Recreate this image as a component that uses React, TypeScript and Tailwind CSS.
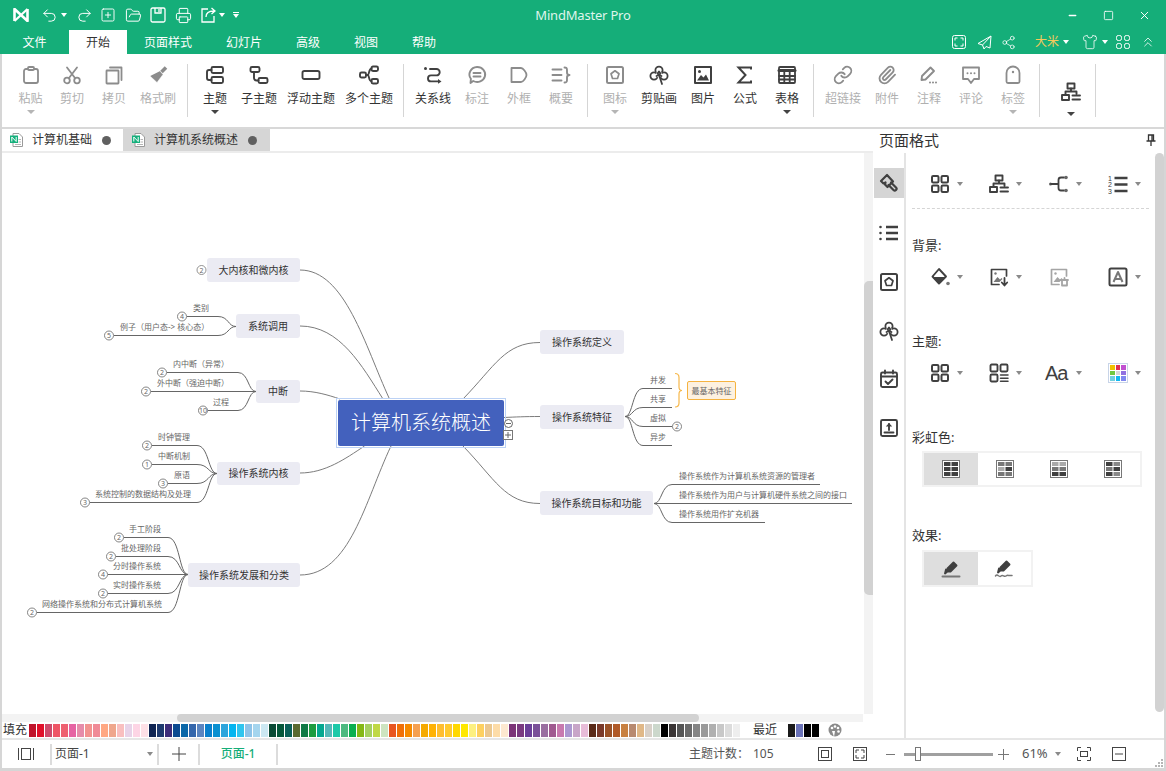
import { type ReactNode } from 'react'
import { Link, Paperclip, Undo2, Redo2, SquarePlus, FolderOpen, Printer, Share2, Shirt, ChevronsUp, Minus, Square, X } from 'lucide-react'

function I({ size = 20, sw = 1.9, children }: { size?: number; sw?: number; children: ReactNode }) {
  return (
    <svg width={size} height={size} viewBox="0 0 20 20" fill="none" stroke="currentColor" strokeWidth={sw} strokeLinejoin="round" strokeLinecap="round">
      {children}
    </svg>
  )
}

function Caret({ light }: { light?: boolean }) {
  return <span className={light ? 'block w-0 h-0 border-x-[4px] border-x-transparent border-t-[4px] border-t-[#b5b5b5]' : 'block w-0 h-0 border-x-[4px] border-x-transparent border-t-[4px] border-t-[#444444]'} />
}

function SmallCaret() {
  return <span className="block w-0 h-0 border-x-[3.5px] border-x-transparent border-t-[4px] border-t-[#8a8a8a]" />
}

function WhiteCaret() {
  return <span className="block w-0 h-0 border-x-[3.5px] border-x-transparent border-t-[4px] border-t-white" />
}

const Clover = () => (
  <I sw={1.8}>
    <circle cx="10" cy="5.2" r="3.6" />
    <circle cx="5" cy="11" r="3.6" />
    <circle cx="15" cy="11" r="3.6" />
    <circle cx="10" cy="9.6" r="3" fill="white" stroke="none" />
    <path d="M10 6.500l-1.500 2 1.500 1.500 1.500 -1.500zM7.500 11l2.500 -1 2.500 1M10 10l3 9" />
  </I>
)
const Grid4 = () => (
  <I sw={2}>
    <rect x="2" y="2" width="6.500" height="6.500" rx="1.200" />
    <rect x="11.500" y="2" width="6.500" height="6.500" rx="1.200" />
    <rect x="2" y="11.500" width="6.500" height="6.500" rx="1.200" />
    <rect x="11.500" y="11.500" width="6.500" height="6.500" rx="1.200" />
  </I>
)
const Org = () => (
  <I sw={1.9}>
    <rect x="6.500" y="1.500" width="7" height="5" />
    <path d="M10 6.500V9.500M4.500 12.500V9.500H15.500V12" />
    <rect x="1" y="13" width="7" height="5" />
    <path d="M11.500 13.500H19M11.500 17.500H19" />
  </I>
)
const Brush = () => (
  <I sw={2.2}>
    <path d="M8 2L2 8l2.500 2.500 2 -1 -0.500 2 2.500 2.500 5.500 -5.500z" />
    <path d="M12 9.500l5 5a1.700 1.700 0 0 1 -2.500 2.500l-5 -5" />
  </I>
)
const StarFrame = () => (
  <I sw={2}>
    <rect x="2" y="2" width="16" height="16" rx="1.500" />
    <path d="M10 5.800l4 3 -1.500 4.700H7.500L6 8.800z" strokeWidth="1.700" />
  </I>
)
const ImageBase = ({ fill }: { fill: string }) => (
  <>
    <path d="M17.500 9V2.500h-15v15H10" />
    <circle cx="6.500" cy="6.500" r="1.200" fill={fill} stroke="none" />
    <path d="M4.500 15l4 -5 2.500 2.500 1.500 -1.500 1 1 -3 3z" fill={fill} stroke="none" />
  </>
)
const FrameTable = ({ shades }: { shades: string[] }) => (
  <svg width="18" height="18" viewBox="0 0 18 18">
    <rect x="0.500" y="0.500" width="17" height="17" fill="white" stroke="#777777" />
    {shades.map((c, i) => (
      <rect key={i} x={i % 2 === 0 ? 2 : 9.5} y={2 + Math.floor(i / 2) * 5} width="6.500" height="4" fill={c} />
    ))}
  </svg>
)

function RibbonBtn({ w, label, off, caret, children }: { w: string; label: string; off?: boolean; caret?: boolean; children: ReactNode }) {
  return (
    <div className={`${w} flex flex-col items-center pt-[11px] ${off ? 'text-[#8c8c8c]' : 'text-[#404040]'}`}>
      <div className="h-[20px] flex items-center justify-center">{children}</div>
      <div className={`mt-[6px] text-[12px] leading-[16px] whitespace-nowrap ${off ? 'text-[#b0b0b0]' : 'text-[#333333]'}`}>{label}</div>
      {caret && <div className="mt-[3px]"><Caret light={off} /></div>}
    </div>
  )
}

const RSep = ({ cls }: { cls: string }) => <div className={`w-px h-[53px] bg-[#d5d5d5] mt-[10px] ${cls}`} />

function Ribbon() {
  return (
    <div className="h-[73px] flex pl-[8px] border-b-2 border-[#d8d8d8] box-content">
      <RibbonBtn w="w-[41px]" label="粘贴" off caret>
        <I sw={1.8}><rect x="3" y="4" width="14" height="14" rx="2" /><rect x="7" y="2" width="6" height="3" rx="1" fill="white" /></I>
      </RibbonBtn>
      <RibbonBtn w="w-[42px]" label="剪切" off>
        <I sw={1.8}><circle cx="5" cy="15.500" r="2.800" /><circle cx="15" cy="15.500" r="2.800" /><path d="M6.800 13.300L15 2.500M13.200 13.300L5 2.500" /></I>
      </RibbonBtn>
      <RibbonBtn w="w-[42px]" label="拷贝" off>
        <I sw={1.8}><rect x="2.500" y="5.500" width="12" height="13" rx="0.500" /><path d="M6 2.500h11.500V15" /></I>
      </RibbonBtn>
      <RibbonBtn w="w-[46px]" label="格式刷" off>
        <I sw={1.5}><path d="M12 6l3 3.500 -6 8L2 11z" fill="currentColor" stroke="white" strokeWidth="0.500" /><path d="M13.500 7L18 2.500" strokeWidth="3.500" strokeLinecap="butt" /></I>
      </RibbonBtn>
      <RSep cls="ml-[6px] mr-[6px]" />
      <RibbonBtn w="w-[42px]" label="主题" caret>
        <I><rect x="6.500" y="2" width="11.500" height="6" rx="1.500" /><rect x="6.500" y="12" width="11.500" height="6" rx="1.500" /><path d="M6.500 5H4a2 2 0 0 0 -2 2v6a2 2 0 0 0 2 2h2.500" /></I>
      </RibbonBtn>
      <RibbonBtn w="w-[46px]" label="子主题">
        <I><rect x="1.500" y="2" width="9" height="5" rx="1.500" /><rect x="9.500" y="13" width="9" height="5" rx="1.500" /><path d="M5 7v6a2.500 2.500 0 0 0 2.500 2.500h2" /></I>
      </RibbonBtn>
      <RibbonBtn w="w-[58px]" label="浮动主题">
        <I><rect x="1.500" y="6" width="17" height="8" rx="1.800" /></I>
      </RibbonBtn>
      <RibbonBtn w="w-[58px]" label="多个主题">
        <I><rect x="1" y="7.500" width="6" height="5" rx="1.500" /><rect x="12.500" y="1.500" width="6.500" height="4.500" rx="1.500" /><rect x="12.500" y="14" width="6.500" height="4.500" rx="1.500" /><path d="M7 10h1.500c2 0 1 -6.200 4 -6.200M8.500 10c2 0 1 6.200 4 6.200" /></I>
      </RibbonBtn>
      <RSep cls="ml-[5px] mr-[6px]" />
      <RibbonBtn w="w-[46px]" label="关系线">
        <I sw={1.9}><circle cx="2.500" cy="3.500" r="1.500" fill="currentColor" stroke="none" /><path d="M7 4h6.500a3.200 3.200 0 0 1 0 6.400H8a3 3 0 0 0 0 6h7" /><path d="M15 14l3.500 2.400 -3.500 2.400z" fill="currentColor" stroke="none" /></I>
      </RibbonBtn>
      <RibbonBtn w="w-[42px]" label="标注" off>
        <I><path d="M10 2a8 7.500 0 1 1 -3.800 14L3.500 18l0.400 -4.200A8 7.500 0 0 1 10 2z" /><path d="M6.500 8h7M6.500 11.500h7" /></I>
      </RibbonBtn>
      <RibbonBtn w="w-[42px]" label="外框" off>
        <I sw={1.8}><path d="M2.500 3H12c2 0 5.500 4.500 5.500 7s-3.500 7 -5.500 7H2.500z" /></I>
      </RibbonBtn>
      <RibbonBtn w="w-[42px]" label="概要" off>
        <I><path d="M1.500 4.500H10.500M1.500 10H10.500M1.500 15.500H10.500" /><path d="M13.500 2.500c2.500 0 2.500 1 2.500 2.500v2.500c0 1.500 1 2.500 2.500 2.500 -1.500 0 -2.500 1 -2.500 2.500V15c0 1.500 0 2.500 -2.500 2.500" /></I>
      </RibbonBtn>
      <RSep cls="ml-[5px] mr-[6px]" />
      <RibbonBtn w="w-[42px]" label="图标" off caret><StarFrame /></RibbonBtn>
      <RibbonBtn w="w-[46px]" label="剪贴画"><Clover /></RibbonBtn>
      <RibbonBtn w="w-[42px]" label="图片">
        <I sw={2}><rect x="2" y="2" width="16" height="16" /><circle cx="6.500" cy="6.500" r="1.500" fill="currentColor" stroke="none" /><path d="M4 15.500l4 -5.500 2.500 2.500 2.500 -3 3 6z" fill="currentColor" stroke="none" /></I>
      </RibbonBtn>
      <RibbonBtn w="w-[42px]" label="公式">
        <I sw={2}><path d="M16 4.500V2.500H3.500L10.500 10l-7 7.500H16v-2" strokeLinejoin="miter" strokeLinecap="butt" /></I>
      </RibbonBtn>
      <RibbonBtn w="w-[42px]" label="表格" caret>
        <I sw={1.8}><rect x="2" y="2" width="16" height="16" rx="1" /><path d="M2 5.500H18" strokeWidth="3" /><path d="M2 11H18M2 14.500H18M7.300 7V18M12.700 7V18" /></I>
      </RibbonBtn>
      <RSep cls="ml-[5px] mr-[6px]" />
      <RibbonBtn w="w-[46px]" label="超链接" off><Link size={20} strokeWidth={2.2} /></RibbonBtn>
      <RibbonBtn w="w-[42px]" label="附件" off><Paperclip size={20} strokeWidth={2.2} /></RibbonBtn>
      <RibbonBtn w="w-[42px]" label="注释" off>
        <I><path d="M2.500 15l0.500 -4L11.500 2.500l3.500 3.500L6.500 14.500z" fill="none" /><path d="M11 17.500v0M14 17.500v0M17 17.500v0" strokeWidth="2" /></I>
      </RibbonBtn>
      <RibbonBtn w="w-[42px]" label="评论" off>
        <I sw={1.8}><path d="M2 2.500h16v11.500h-5l-3 4 -3 -4H2z" /><path d="M6.500 8.200v0M10 8.200v0M13.500 8.200v0" strokeWidth="2" /></I>
      </RibbonBtn>
      <RibbonBtn w="w-[42px]" label="标签" off caret>
        <I sw={1.8}><path d="M3.500 16.500V8a6.500 6.500 0 0 1 13 0v8.500a1.500 1.500 0 0 1 -1.500 1.500H5a1.500 1.500 0 0 1 -1.500 -1.500z" /><circle cx="10" cy="7" r="1.200" fill="currentColor" stroke="none" /></I>
      </RibbonBtn>
      <RSep cls="ml-[5px] mr-[6px]" />
      <div className="w-[49px] flex flex-col items-center text-[#404040]">
        <div className="mt-[28px]"><Org /></div>
        <div className="mt-[10px]"><Caret /></div>
      </div>
      <RSep cls="" />
    </div>
  )
}

const DocIcon = () => (
  <svg width="13" height="14" viewBox="0 0 13 14">
    <path d="M3 0.500h6l3.500 3.500v9.500H3z" fill="white" stroke="#9a9a9a" />
    <rect x="0" y="2.500" width="8" height="7.500" fill="#15b07c" />
    <path d="M1.800 8.500V4l4.400 4.500V4" stroke="white" strokeWidth="1" fill="none" />
    <path d="M8.500 6.500h2.500M8.500 9h2.500M5 11.500h6" stroke="#b5b5b5" />
  </svg>
)

function DocTabs() {
  return (
    <div className="h-[24px] flex border-b-2 border-[#ececec] box-border shrink-0">
      <div className="w-[121px] h-[22px] flex items-center pl-[8px] text-[12px] text-[#333333]">
        <DocIcon />
        <span className="ml-[9px] w-[60px]">计算机基础</span>
        <span className="ml-[10px] w-[9px] h-[9px] rounded-full bg-[#606060]" />
      </div>
      <div className="w-[147px] h-[22px] bg-[#d6d6d6] flex items-center pl-[9px] text-[12px] text-[#333333]">
        <DocIcon />
        <span className="ml-[9px] w-[84px]">计算机系统概述</span>
        <span className="ml-[10px] w-[9px] h-[9px] rounded-full bg-[#606060]" />
      </div>
    </div>
  )
}

type Topic = { t: string; x: number; y: number; w: number; h: number }
type Leaf = { t: string; x: number; y: number; n?: number; end: number }
type Group = { ox: number; oy: number; lx: number; leaves: Leaf[] }

const topics: Topic[] = [
  { t: '大内核和微内核', x: 207, y: 257, w: 93, h: 24 },
  { t: '系统调用', x: 236, y: 313, w: 64, h: 24 },
  { t: '中断', x: 256, y: 379, w: 44, h: 23 },
  { t: '操作系统内核', x: 217, y: 461, w: 83, h: 23 },
  { t: '操作系统发展和分类', x: 188, y: 562, w: 112, h: 24 },
  { t: '操作系统定义', x: 540, y: 329, w: 84, h: 24 },
  { t: '操作系统特征', x: 540, y: 404, w: 84, h: 24 },
  { t: '操作系统目标和功能', x: 540, y: 490, w: 113, h: 24 },
]

// y is the line under the label, x the label's left edge
const leftGroups: Group[] = [
  {
    ox: 236, oy: 325.5, lx: 218,
    leaves: [
      { t: '类别', x: 193, y: 315.5, n: 4, end: 187 },
      { t: '例子（用户态-> 核心态）', x: 120, y: 334.5, n: 5, end: 114 },
    ],
  },
  {
    ox: 256, oy: 390.5, lx: 238,
    leaves: [
      { t: '内中断（异常）', x: 173, y: 371.5, n: 2, end: 167 },
      { t: '外中断（强迫中断）', x: 157, y: 390.5, n: 2, end: 151 },
      { t: '过程', x: 213, y: 409.5, n: 10, end: 208 },
    ],
  },
  {
    ox: 217, oy: 472.5, lx: 197,
    leaves: [
      { t: '时钟管理', x: 158, y: 444.5, n: 2, end: 152 },
      { t: '中断机制', x: 158, y: 463.5, n: 1, end: 152 },
      { t: '原语', x: 174, y: 482.5, n: 3, end: 168 },
      { t: '系统控制的数据结构及处理', x: 95, y: 501.5, n: 3, end: 90 },
    ],
  },
  {
    ox: 188, oy: 573.5, lx: 168,
    leaves: [
      { t: '手工阶段', x: 129, y: 536.5, n: 2, end: 124 },
      { t: '批处理阶段', x: 121, y: 555.5, n: 2, end: 116 },
      { t: '分时操作系统', x: 113, y: 573.5, n: 4, end: 108 },
      { t: '实时操作系统', x: 113, y: 592.5, n: 2, end: 108 },
      { t: '网络操作系统和分布式计算机系统', x: 42, y: 611.5, n: 2, end: 37 },
    ],
  },
]

const rightGroups: Group[] = [
  {
    ox: 625, oy: 415.5, lx: 643,
    leaves: [
      { t: '并发', x: 650, y: 387.5, end: 672 },
      { t: '共享', x: 650, y: 406.5, end: 672 },
      { t: '虚拟', x: 650, y: 425.5, end: 672, n: 2 },
      { t: '异步', x: 650, y: 444.5, end: 672 },
    ],
  },
  {
    ox: 654, oy: 502.5, lx: 672,
    leaves: [
      { t: '操作系统作为计算机系统资源的管理者', x: 679, y: 483.5, end: 820 },
      { t: '操作系统作为用户与计算机硬件系统之间的接口', x: 679, y: 502.5, end: 852 },
      { t: '操作系统用作扩充机器', x: 679, y: 521.5, end: 765 },
    ],
  },
]

const mainCurves = [
  'M300 269C345 269 365 345 389.5 398',
  'M300 325C340 325 362 365 383 398',
  'M300 390C315 390 328 394 340 398',
  'M300 472C325 472 345 458 364.5 445',
  'M300 574C350 574 365 500 391 445',
  'M463 398C495 365 505 341.5 540 341.5',
  'M504 416.5C515 416 525 415.5 540 415.5',
  'M463 445C495 478 505 502.5 540 502.5',
]

function MindMap() {
  const leaves = [...leftGroups, ...rightGroups].flatMap((g) => g.leaves)
  const badgeX = (l: Leaf) => (l.end > 600 ? l.end + 5 : l.end - 5)
  return (
    <div className="absolute left-[-2px] top-[-152px] w-[1166px] h-[771px]">
      <svg className="absolute left-0 top-0" width="1166" height="771" fill="none">
        {mainCurves.map((d) => <path key={d} d={d} stroke="#7c7c7c" strokeWidth="1" />)}
        {[...leftGroups, ...rightGroups].map((g) =>
          g.leaves.map((l) => {
            const dir = Math.sign(g.lx - g.ox)
            const dx = Math.abs(g.lx - g.ox)
            const start = `M${g.ox} ${g.oy}`
            const curve = Math.abs(l.y - g.oy) < 1 ? `L${l.end} ${l.y}` : `C${g.ox + dir * dx * 0.45} ${g.oy} ${g.ox + dir * dx * 0.4} ${l.y} ${g.lx} ${l.y}L${l.end} ${l.y}`
            return <path key={l.t} d={start + curve} stroke="#666666" strokeWidth="1" />
          }),
        )}
        <path d="M675 372.5c3 0 4 1 4 4v9.500c0 3 1 3.500 3 3.500 -2 0 -3 0.500 -3 3.500v9c0 3 -1 4 -4 4" stroke="#f7b84b" strokeWidth="1.2" />
        <circle cx="201.5" cy="269" r="4.5" fill="white" stroke="#777777" strokeWidth="0.8" />
        {leaves.filter((l) => l.n).map((l) => (
          <circle key={l.t} cx={badgeX(l)} cy={l.y} r="4.5" fill="white" stroke="#666666" strokeWidth="0.8" />
        ))}
      </svg>
      {topics.map((n) => (
        <div key={n.t} className="absolute flex items-center justify-center rounded-[3px] bg-[#ebebf3] text-[10px] text-[#333333] whitespace-nowrap" style={{ left: n.x, top: n.y, width: n.w, height: n.h }}>
          {n.t}
        </div>
      ))}
      {leaves.map((l) => (
        <div key={l.t} className="absolute text-[8px] leading-[10px] text-[#666666] whitespace-nowrap" style={{ left: l.x, top: l.y - 13.5 }}>
          {l.t}
        </div>
      ))}
      {leaves.filter((l) => l.n).map((l) => (
        <div key={l.t} className="absolute w-[9px] text-center text-[7px] leading-[9px] text-[#666666]" style={{ left: badgeX(l) - 4.5, top: l.y - 4.5 }}>
          {l.n}
        </div>
      ))}
      <div className="absolute left-[197px] top-[264.5px] w-[9px] text-center text-[7px] leading-[9px] text-[#666666]">2</div>
      <div className="absolute left-[336px] top-[397px] w-[170px] h-[50px] border border-[#bcd2f5] p-[1px]">
        <div className="w-full h-full rounded-[2px] bg-[#4361bd] flex items-center justify-center text-[20px] text-white font-light whitespace-nowrap">计算机系统概述</div>
      </div>
      <div className="absolute left-[503.5px] top-[418px] w-[9px] h-[9px] rounded-full border border-[#666666] bg-white flex items-center justify-center">
        <span className="w-[5px] h-px bg-[#666666]" />
      </div>
      <svg className="absolute left-[503px] top-[428.5px]" width="10" height="10" fill="none">
        <rect x="0.5" y="0.5" width="9" height="9" fill="white" stroke="#777777" />
        <path d="M2 5H8M5 2V8" stroke="#666666" />
      </svg>
      <div className="absolute left-[687px] top-[380px] w-[49px] h-[19px] rounded-[2px] border border-[#f5b340] bg-[#fdf1e0] flex items-center justify-center text-[8px] text-[#666666]">最基本特征</div>
    </div>
  )
}

const reds = ['#c0132a', '#e0102a', '#ce4a6b', '#ee5566', '#ee6070', '#e663a3', '#e68caa', '#f29390', '#f08a96', '#ffa782', '#efa68c', '#f9bfbf', '#e8d3e8', '#fdd5e5', '#fde0e6']
const blues = ['#0f2452', '#1e3a6e', '#3d2d7a', '#0c4a90', '#0a67a8', '#3567ac', '#5b85c0', '#0a80cc', '#0a90d0', '#2da5dc', '#05b5f0', '#30c5ee', '#8ec3e8', '#a5d5ee', '#cce8f2']
const greens = ['#0a4a35', '#05573a', '#0a6058', '#5a6a30', '#0f7a45', '#1c9c40', '#05a890', '#55b8b8', '#1cc9a8', '#4cb97f', '#0aaf50', '#85b815', '#a5d060', '#c0d845', '#cde4c0']
const oranges = ['#e85520', '#f07008', '#f58a00', '#f5a050', '#f5aa00', '#ffb205', '#ffbe30', '#ffca30', '#ffd800', '#ffe800', '#fdf080', '#fdd060', '#ebc890', '#fddca8', '#fde8d0']
const purples = ['#7c3478', '#7a3a80', '#6b3f98', '#7a5098', '#9a6ea0', '#a05a90', '#c87aaf', '#ac98d0', '#c8a5c8', '#e8bcd8']
const browns = ['#5a2a18', '#7a3a2a', '#9a5228', '#b05a28', '#c88040', '#b88a70', '#e0b888', '#d8d0c8', '#ccd8cc']
const greys = ['#000000', '#3a3535', '#555555', '#6a6a6a', '#858585', '#9a9a9a', '#b0b0b0', '#c8c8c8', '#dcdcdc', '#eeeeee']
const recent = ['#1a1a1a', '#6a72b8', '#000000', '#000000']

function Palette() {
  const all = [...reds, ...blues, ...greens, ...oranges, ...purples, ...browns, ...greys]
  return (
    <div className="h-[16px] flex items-center shrink-0 text-[12px] text-[#333333]">
      <span className="w-[27px] pl-px">填充</span>
      {all.map((c, i) => <span key={i} className="w-[8px] h-[13px] border-r border-white" style={{ backgroundColor: c }} />)}
      <span className="ml-[12px] w-[35px]">最近</span>
      {recent.map((c, i) => <span key={i} className="w-[8px] h-[13px] border-r border-white" style={{ backgroundColor: c }} />)}
      <svg className="ml-[8px]" width="14" height="14" viewBox="0 0 14 14">
        <circle cx="7" cy="7" r="6.5" fill="#8a8a8a" />
        <circle cx="4" cy="5" r="1.3" fill="white" />
        <circle cx="7" cy="3.5" r="1.3" fill="white" />
        <circle cx="10" cy="5" r="1.3" fill="white" />
        <circle cx="10.5" cy="8.5" r="1.3" fill="white" />
        <path d="M6 14L7 8H4z" fill="white" />
      </svg>
    </div>
  )
}

function Drop({ w, pl, caret = true, children }: { w: string; pl: string; caret?: boolean; children: ReactNode }) {
  return (
    <div className={`${w} ${pl} h-[24px] flex items-center text-[#404040]`}>
      <div className="w-[20px] flex justify-center">{children}</div>
      {caret && <div className="ml-[7px]"><SmallCaret /></div>}
    </div>
  )
}

const Row = ({ children }: { children: ReactNode }) => <div className="flex pl-[4px]">{children}</div>
const Title = ({ cls, children }: { cls: string; children: ReactNode }) => <div className={`${cls} text-[13px] leading-[18px] text-[#333333] pl-[6px]`}>{children}</div>

const rb1 = ['#404040', '#404040', '#404040', '#404040', '#404040', '#404040']
const rb2 = ['#777777', '#777777', '#aaaaaa', '#404040', '#777777', '#777777']
const rb3 = ['#aaaaaa', '#aaaaaa', '#777777', '#777777', '#404040', '#404040']
const rb4 = ['#404040', '#888888', '#777777', '#404040', '#404040', '#888888']

function SidePanel() {
  const palette = ['#f0c000', '#e03050', '#c050d0', '#70c840', '#d8d8d8', '#9070e0', '#70d0e0', '#10b8f0', '#8088f0']
  return (
    <div className="w-[291px] flex flex-col shrink-0">
      <div className="h-[24px] flex items-center justify-between pl-[6px] pr-[8px] pb-[2px] shrink-0">
        <span className="text-[15px] text-[#333333]">页面格式</span>
        <svg width="10" height="12" viewBox="0 0 10 12" fill="none" stroke="#333333" strokeWidth="1.3">
          <path d="M2.500 1H7.500V7H2.500zM0.500 7H9.500M5 7V12M6 1V7" />
        </svg>
      </div>
      <div className="flex-1 flex min-h-0">
        <div className="w-[33px] border-r-2 border-[#e4e4e4] flex flex-col items-center pt-[15px] text-[#404040] shrink-0">
          <div className="w-[30px] h-[30px] bg-[#d5d5d5] flex items-center justify-center"><Brush /></div>
          <div className="mt-[25px] h-[20px]">
            <I sw={2.4}><path d="M7 4H19M7 10H19M7 16H19" strokeLinecap="butt" /><path d="M1.500 4v0M1.500 10v0M1.500 16v0" strokeWidth="2.600" /></I>
          </div>
          <div className="mt-[29px] h-[20px]"><StarFrame /></div>
          <div className="mt-[29px] h-[20px]"><Clover /></div>
          <div className="mt-[28px] h-[20px]">
            <I sw={1.9}><rect x="2" y="3.500" width="16" height="14.500" rx="1.500" /><path d="M2 7.500H18M6 1.500V4.500M14 1.500V4.500M6.500 12.500l2.500 2.500 4.500 -4.500" /></I>
          </div>
          <div className="mt-[29px] h-[20px]">
            <I sw={1.9}><rect x="2" y="2" width="16" height="16" rx="1.500" /><path d="M5.500 14.500H14.500M10 12V6" /><path d="M6.800 8.500L10 5l3.200 3.500z" fill="currentColor" stroke="none" /></I>
          </div>
        </div>
        <div className="w-[249px] pt-[19px] shrink-0">
          <Row>
            <Drop w="w-[59px]" pl="pl-[20px]"><Grid4 /></Drop>
            <Drop w="w-[60px]" pl="pl-[20px]"><Org /></Drop>
            <Drop w="w-[59px]" pl="pl-[20px]">
              <I sw={1.8}><circle cx="1.500" cy="10" r="1.500" fill="#666666" stroke="none" /><path d="M2 10H9M15 3.500h-3a2.500 2.500 0 0 0 -2.500 2.500v8a2.500 2.500 0 0 0 2.500 2.500h3" /><circle cx="17" cy="3.500" r="1.800" fill="#666666" stroke="none" /><circle cx="17" cy="16.500" r="1.800" fill="#666666" stroke="none" /></I>
            </Drop>
            <Drop w="w-[60px]" pl="pl-[20px]">
              <svg width="20" height="20" viewBox="0 0 20 20">
                <text x="0" y="6.500" fontSize="7" fill="#404040" fontFamily="Liberation Sans">1</text>
                <text x="0" y="13" fontSize="7" fill="#404040" fontFamily="Liberation Sans">2</text>
                <text x="0" y="19.500" fontSize="7" fill="#404040" fontFamily="Liberation Sans">3</text>
                <path d="M6.500 4H19.500M6.500 10.500H19.500M6.500 17H19.500" stroke="#404040" strokeWidth="2.500" />
              </svg>
            </Drop>
          </Row>
          <div className="ml-[6px] mr-[6px] mt-[12px] border-t border-dashed border-[#d5d5d5]" />
          <Title cls="mt-[27px]">背景:</Title>
          <div className="mt-[11px]">
            <Row>
              <Drop w="w-[59px]" pl="pl-[20px]">
                <I sw={1.9}><path d="M9 2l7 7.500 -7 7 -6.500 -7z" /><path d="M3 10h13l-7 7z" fill="currentColor" stroke="none" /><circle cx="18" cy="16.500" r="1.800" fill="#777777" stroke="none" /></I>
              </Drop>
              <Drop w="w-[60px]" pl="pl-[20px]">
                <I sw={1.7}><ImageBase fill="#777777" /><path d="M15.500 11v7M12.800 15.500l2.700 3 2.700 -3" strokeWidth="1.800" /></I>
              </Drop>
              <Drop w="w-[59px]" pl="pl-[20px]" caret={false}>
                <div className="text-[#a5a5a5]">
                  <I sw={1.7}><ImageBase fill="#a5a5a5" /><path d="M11.500 13H19M13 13v5.500H18V13M15.500 11v2" strokeWidth="1.800" /></I>
                </div>
              </Drop>
              <Drop w="w-[60px]" pl="pl-[20px]">
                <I sw={2}><rect x="1.500" y="1.500" width="17" height="17" rx="1.500" /><path d="M5.500 15l4.500 -10 4.500 10M7 12H13" stroke="#777777" strokeLinecap="butt" /></I>
              </Drop>
            </Row>
          </div>
          <Title cls="mt-[43px]">主题:</Title>
          <div className="mt-[11px]">
            <Row>
              <Drop w="w-[59px]" pl="pl-[20px]"><Grid4 /></Drop>
              <Drop w="w-[60px]" pl="pl-[20px]">
                <I sw={1.9}><rect x="1.500" y="1.500" width="7" height="7" rx="1.200" /><rect x="11.500" y="1.500" width="7" height="7" rx="1.200" /><rect x="1.500" y="11.500" width="7" height="7" rx="1.200" /><path d="M11.500 12H19M11.500 15.200H19M11.500 18.200H19" strokeWidth="1.500" /></I>
              </Drop>
              <div className="w-[59px] pl-[16px] h-[24px] flex items-center text-[#404040]">
                <span className="w-[31px] text-[20px] leading-[24px] font-['Liberation_Sans',sans-serif] tracking-[-1px]">Aa</span>
                <SmallCaret />
              </div>
              <Drop w="w-[60px]" pl="pl-[20px]">
                <div className="w-[21px] h-[20px] border border-[#c8d4e8] p-[1px] grid grid-cols-3 gap-px">
                  {palette.map((c) => <span key={c} style={{ backgroundColor: c }} />)}
                </div>
              </Drop>
            </Row>
          </div>
          <Title cls="mt-[43px]">彩虹色:</Title>
          <div className="mt-[5px] ml-[16px] w-[220px] h-[36px] border-2 border-[#f2f2f2] flex">
            <div className="w-[54px] bg-[#dedede] flex items-center justify-center"><FrameTable shades={rb1} /></div>
            <div className="w-[54px] flex items-center justify-center"><FrameTable shades={rb2} /></div>
            <div className="w-[54px] flex items-center justify-center"><FrameTable shades={rb3} /></div>
            <div className="w-[54px] flex items-center justify-center"><FrameTable shades={rb4} /></div>
          </div>
          <Title cls="mt-[39px]">效果:</Title>
          <div className="mt-[6px] ml-[16px] w-[111px] h-[37px] border-2 border-[#f2f2f2] flex text-[#404040]">
            <div className="w-[54px] bg-[#dedede] flex items-center justify-center">
              <I><path d="M7.500 12.500l-1 -3 6 -6 3 3 -6 6z" fill="currentColor" /><path d="M1.500 17.500H18.500" stroke="#777777" strokeWidth="2" /><path d="M7 12l-3 2.500 1 -4z" fill="currentColor" /></I>
            </div>
            <div className="w-[54px] flex items-center justify-center">
              <I><path d="M7.500 11.500l-1 -3 6 -6 3 3 -6 6z" fill="currentColor" /><path d="M7 11l-3 2.500 1 -4z" fill="currentColor" /><path d="M1.500 17c2 -3 3.500 2 5.500 0s3 1.500 5 0 2 0 6 -0.500" stroke="#777777" strokeWidth="1.500" /></I>
            </div>
          </div>
        </div>
        <div className="w-[9px] shrink-0 pb-[26px]">
          <div className="h-full rounded-[5px] bg-[#d2d2d2]" />
        </div>
      </div>
    </div>
  )
}

const SSep = () => <div className="w-[2px] h-[21px] bg-[#dcdcdc] shrink-0" />

function StatusBar() {
  return (
    <div className="h-[30px] flex items-center border-t-2 border-[#e6e6e6] text-[12px] text-[#555555] box-border shrink-0">
      <div className="w-[48px] flex justify-center text-[#444444]">
        <svg width="16" height="12" viewBox="0 0 16 12" fill="none" stroke="currentColor"><rect x="3.5" y="0.5" width="9" height="11" /><path d="M0.5 0V12M15.5 0V12" /></svg>
      </div>
      <SSep />
      <div className="w-[105px] flex items-center justify-between pl-[3px] pr-[4px] text-[#444444]">
        <span>页面-1</span>
        <SmallCaret />
      </div>
      <SSep />
      <div className="w-[39px] flex justify-center text-[#444444]">
        <svg width="14" height="14" viewBox="0 0 14 14" stroke="currentColor"><path d="M0 7H14M7 0V14" /></svg>
      </div>
      <SSep />
      <div className="w-[76px] text-center text-[#15ae79] font-medium">页面-1</div>
      <SSep />
      <div className="w-[411px]" />
      <div className="w-[64px]">主题计数：</div>
      <div className="w-[65px]">105</div>
      <div className="w-[35px] text-[#444444]">
        <svg width="14" height="14" viewBox="0 0 14 14" fill="none" stroke="currentColor"><rect x="0.5" y="0.5" width="13" height="13" /><rect x="3.5" y="3.5" width="7" height="7" /></svg>
      </div>
      <div className="w-[33px] text-[#444444]">
        <svg width="14" height="14" viewBox="0 0 14 14" fill="none" stroke="currentColor"><rect x="0.5" y="0.5" width="13" height="13" /><path d="M3 6V3H6M8 3H11V6M11 8V11H8M6 11H3V8" /></svg>
      </div>
      <div className="w-[9px] h-px bg-[#777777]" />
      <div className="relative ml-[9px] w-[89px] h-[3px] bg-[#a0a0a0]">
        <div className="absolute left-[11px] top-[-6px] w-[6px] h-[14px] bg-white border border-[#777777]" />
      </div>
      <div className="ml-[5px] w-[11px]">
        <svg width="11" height="11" viewBox="0 0 11 11" stroke="#777777"><path d="M0 5.5H11M5.500 0V11" /></svg>
      </div>
      <div className="ml-[13px] w-[30px] text-[13px]">61%</div>
      <div className="ml-[3px]"><SmallCaret /></div>
      <div className="ml-[16px] w-[35px] text-[#444444]">
        <svg width="14" height="14" viewBox="0 0 14 14" fill="none" stroke="currentColor"><path d="M0.5 4V0.5H4M10 0.5H13.5V4M13.5 10V13.5H10M4 13.5H0.5V10" /><rect x="3.5" y="4.5" width="7" height="5" /></svg>
      </div>
      <div className="text-[#444444]">
        <svg width="14" height="14" viewBox="0 0 14 14" fill="none" stroke="currentColor"><rect x="0.5" y="0.5" width="13" height="13" /><path d="M3 7H11" /></svg>
      </div>
    </div>
  )
}

function TitleBar() {
  return (
    <div className="h-[30px] flex items-center text-white shrink-0 relative">
      <svg className="ml-[13px]" width="16" height="14" viewBox="0 0 16 14" fill="none" stroke="white" strokeWidth="2.6" strokeLinejoin="round">
        <path d="M1.500 13V1L14.500 13V1" />
        <path d="M1.500 13L14.500 1" strokeWidth="2.200" />
      </svg>
      <div className="ml-[12px]"><Undo2 size={17} strokeWidth={1.4} /></div>
      <div className="ml-[3px]"><WhiteCaret /></div>
      <div className="ml-[9px]"><Redo2 size={17} strokeWidth={1.4} /></div>
      <div className="ml-[7px]"><SquarePlus size={16} strokeWidth={1.4} /></div>
      <div className="ml-[9px]"><FolderOpen size={17} strokeWidth={1.4} /></div>
      <div className="ml-[8px]">
        <svg width="16" height="16" viewBox="0 0 16 16" fill="none" stroke="white" strokeWidth="1.3"><rect x="1" y="1" width="14" height="14" rx="1.5" /><path d="M5 1V6H11V1M9 2V5" /></svg>
      </div>
      <div className="ml-[9px]"><Printer size={17} strokeWidth={1.4} /></div>
      <div className="ml-[8px]">
        <svg width="17" height="16" viewBox="0 0 17 16" fill="none" stroke="white" strokeWidth="1.3"><path d="M8 2H2V15H14V9" /><path d="M6 10c0 -4 3 -6 8 -6M11.500 1L15 4 11.500 7" /></svg>
      </div>
      <div className="ml-[2px]"><WhiteCaret /></div>
      <div className="ml-[7px] w-[7px] flex flex-col gap-px items-center">
        <span className="w-[6px] h-px bg-white" />
        <WhiteCaret />
      </div>
      <div className="absolute left-0 right-0 top-0 h-[30px] pt-[2px] flex items-center justify-center pointer-events-none text-[13px] tracking-[-0.2px] text-[#dff5ec]">MindMaster Pro</div>
      <div className="ml-auto flex items-center">
        <div className="w-[36px] flex justify-center"><Minus size={11} strokeWidth={3} /></div>
        <div className="w-[36px] flex justify-center"><Square size={11} strokeWidth={1.8} /></div>
        <div className="w-[36px] mr-[4px] flex justify-center"><X size={13} strokeWidth={1.8} /></div>
      </div>
    </div>
  )
}

function MenuTabs() {
  const items = ['页面样式', '幻灯片', '高级', '视图', '帮助']
  return (
    <div className="h-[24px] flex text-[12px] text-white shrink-0 items-center">
      <div className="w-[69px] text-center pt-px">文件</div>
      <div className="w-[58px] h-[24px] bg-white text-[#333333] flex items-center justify-center pt-px">开始</div>
      {items.map((t) => <div key={t} className="px-[17px] pt-px">{t}</div>)}
      <div className="ml-auto flex items-center pr-[10px]">
        <svg width="14" height="14" viewBox="0 0 14 14" fill="none" stroke="white"><rect x="0.5" y="0.5" width="13" height="13" rx="2" /><path d="M3 5.500V3H5.500M8.500 3H11V5.500M11 8.500V11H8.500M5.500 11H3V8.500" /></svg>
        <svg className="ml-[11px]" width="15" height="15" viewBox="0 0 15 15" fill="none" stroke="white" strokeLinejoin="round"><path d="M14 1L1 8.500l4.500 1.500 1.500 4 2 -2.500 4 1.500zM5.500 10L14 1" /></svg>
        <div className="ml-[9px]"><Share2 size={15} strokeWidth={1.2} /></div>
        <span className="ml-[19px] text-[#f5ca5c]">大米</span>
        <div className="ml-[4px]"><WhiteCaret /></div>
        <div className="ml-[13px]"><Shirt size={16} strokeWidth={1.2} /></div>
        <div className="ml-[4px]"><WhiteCaret /></div>
        <svg className="ml-[8px]" width="14" height="14" viewBox="0 0 14 14" fill="none" stroke="white"><rect x="0.5" y="0.5" width="5" height="5" rx="1.8" /><rect x="8.5" y="0.5" width="5" height="5" rx="1.8" /><rect x="0.5" y="8.5" width="5" height="5" rx="1.8" /><rect x="8.5" y="8.5" width="5" height="5" rx="1.8" /></svg>
        <div className="ml-[10px]"><ChevronsUp size={16} strokeWidth={1.2} /></div>
      </div>
    </div>
  )
}

export default function App() {
  return (
    <div className="relative w-[1166px] h-[771px] flex flex-col overflow-hidden bg-[#15ae79] font-['Noto_Sans','Noto_Sans_CJK_SC',sans-serif]">
      <TitleBar />
      <MenuTabs />
      <div className="flex-1 min-h-0 flex flex-col bg-white border-l-2 border-r-2 border-b-[3px] border-[#d6d6d6]">
        <Ribbon />
        <div className="flex-1 min-h-0 flex">
          <div className="w-[871px] flex flex-col shrink-0">
            <DocTabs />
            <div className="flex-1 min-h-0 flex">
              <div className="flex-1 relative overflow-hidden"><MindMap /></div>
              <div className="w-[9px] bg-[#f3f3f3] pt-[128px] pb-[119px] shrink-0">
                <div className="h-full rounded-l-[5px] bg-[#d2d2d2]" />
              </div>
            </div>
            <div className="h-[8px] w-[861px] bg-[#f3f3f3] pl-[175px] pr-[164px] shrink-0">
              <div className="h-full rounded-[4px] bg-[#d2d2d2]" />
            </div>
            <Palette />
          </div>
          <SidePanel />
        </div>
        <StatusBar />
      </div>
      <svg className="absolute right-[2px] bottom-[3px]" width="10" height="10" fill="#b5b5b5">
        <rect x="7" y="1" width="2" height="2" />
        <rect x="4" y="4" width="2" height="2" />
        <rect x="7" y="4" width="2" height="2" />
        <rect x="1" y="7" width="2" height="2" />
        <rect x="4" y="7" width="2" height="2" />
        <rect x="7" y="7" width="2" height="2" />
      </svg>
    </div>
  )
}
